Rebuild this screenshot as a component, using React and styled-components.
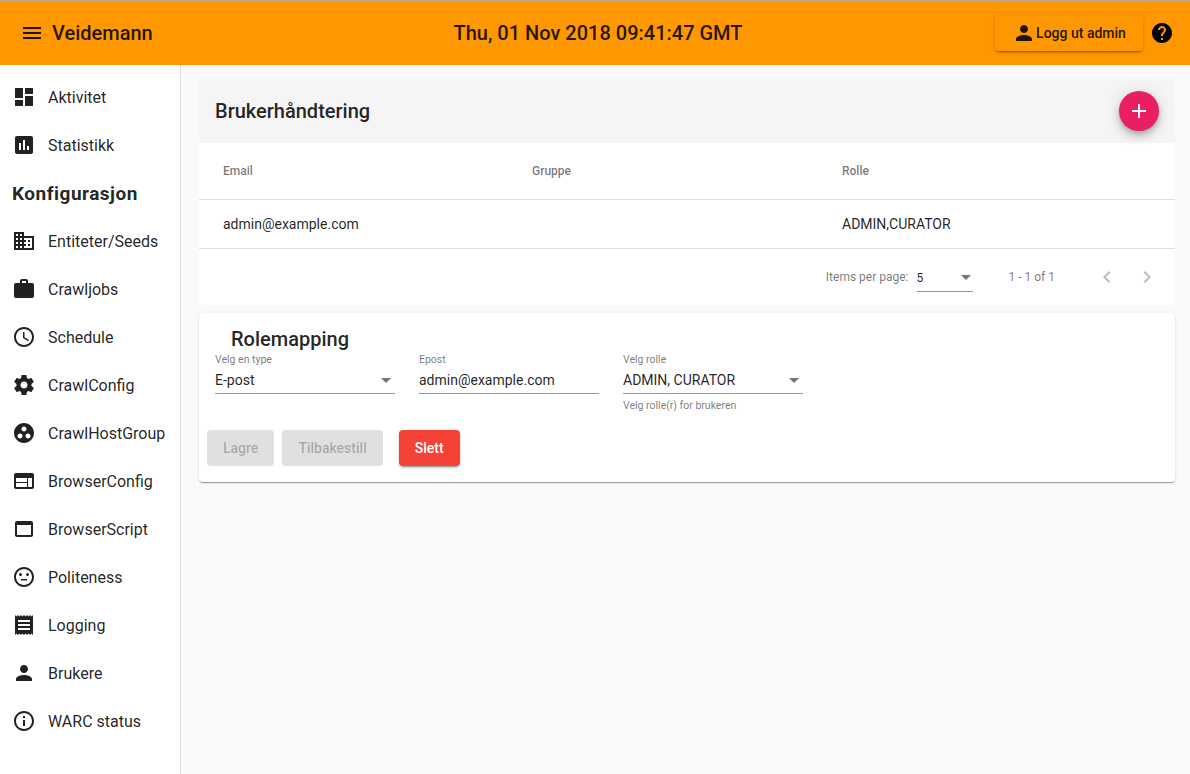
import React from "react";
import styled, { createGlobalStyle } from "styled-components";

const GlobalStyle = createGlobalStyle`
  html, body {
    margin: 0;
    height: 100%;
    overflow: hidden;
    font-family: Roboto, "Liberation Sans", sans-serif;
    color: rgba(0, 0, 0, 0.87);
    background: #fafafa;
  }
`;

// Material icon paths
const icons = {
  menu: "M3 18h18v-2H3v2zm0-5h18v-2H3v2zm0-7v2h18V6H3z",
  dashboard: "M3 13h8V3H3v10zm0 8h8v-6H3v6zm10 0h8V11h-8v10zm0-18v6h8V3h-8z",
  assessment: "M19 3H5c-1.1 0-2 .9-2 2v14c0 1.1.9 2 2 2h14c1.1 0 2-.9 2-2V5c0-1.1-.9-2-2-2zM9 17H7v-7h2v7zm4 0h-2V7h2v10zm4 0h-2v-4h2v4z",
  domain: "M12 7V3H2v18h20V7H12zM6 19H4v-2h2v2zm0-4H4v-2h2v2zm0-4H4V9h2v2zm0-4H4V5h2v2zm4 12H8v-2h2v2zm0-4H8v-2h2v2zm0-4H8V9h2v2zm0-4H8V5h2v2zm10 12h-8v-2h2v-2h-2v-2h2v-2h-2V9h8v10zm-2-8h-2v2h2v-2zm0 4h-2v2h2v-2z",
  work: "M20 6h-4V4c0-1.11-.89-2-2-2h-4c-1.11 0-2 .89-2 2v2H4c-1.11 0-1.99.89-1.99 2L2 19c0 1.11.89 2 2 2h16c1.11 0 2-.89 2-2V8c0-1.11-.89-2-2-2zm-6 0h-4V4h4v2z",
  schedule: "M11.99 2C6.47 2 2 6.48 2 12s4.47 10 9.99 10C17.52 22 22 17.52 22 12S17.52 2 11.99 2zM12 20c-4.42 0-8-3.58-8-8s3.58-8 8-8 8 3.58 8 8-3.58 8-8 8zm.5-13H11v6l5.25 3.15.75-1.23-4.5-2.67z",
  settings: "M19.43 12.98c.04-.32.07-.64.07-.98s-.03-.66-.07-.98l2.11-1.65c.19-.15.24-.42.12-.64l-2-3.46c-.12-.22-.39-.3-.61-.22l-2.49 1c-.52-.4-1.08-.73-1.69-.98l-.38-2.65C14.46 2.18 14.25 2 14 2h-4c-.25 0-.46.18-.49.42l-.38 2.65c-.61.25-1.17.59-1.69.98l-2.49-1c-.23-.09-.49 0-.61.22l-2 3.46c-.13.22-.07.49.12.64l2.11 1.65c-.04.32-.07.65-.07.98s.03.66.07.98l-2.11 1.65c-.19.15-.24.42-.12.64l2 3.46c.12.22.39.3.61.22l2.49-1c.52.4 1.08.73 1.69.98l.38 2.65c.03.24.24.42.49.42h4c.25 0 .46-.18.49-.42l.38-2.65c.61-.25 1.17-.59 1.69-.98l2.49 1c.23.09.49 0 .61-.22l2-3.46c.12-.22.07-.49-.12-.64l-2.11-1.65zM12 15.5c-1.93 0-3.5-1.57-3.5-3.5s1.57-3.5 3.5-3.5 3.5 1.57 3.5 3.5-1.57 3.5-3.5 3.5z",
  groupWork: "M12 2C6.48 2 2 6.48 2 12s4.48 10 10 10 10-4.48 10-10S17.52 2 12 2zM8 17.5c-1.38 0-2.5-1.12-2.5-2.5s1.12-2.5 2.5-2.5 2.5 1.12 2.5 2.5-1.12 2.5-2.5 2.5zM9.5 8c0-1.38 1.12-2.5 2.5-2.5s2.5 1.12 2.5 2.5-1.12 2.5-2.5 2.5S9.5 9.38 9.5 8zm6.5 9.5c-1.38 0-2.5-1.12-2.5-2.5s1.12-2.5 2.5-2.5 2.5 1.12 2.5 2.5-1.12 2.5-2.5 2.5z",
  web: "M20 4H4c-1.1 0-1.99.9-1.99 2L2 18c0 1.1.9 2 2 2h16c1.1 0 2-.9 2-2V6c0-1.1-.9-2-2-2zm-5 14H4v-4h11v4zm0-5H4V9h11v4zm5 5h-4V9h4v9z",
  webAsset: "M19 4H5c-1.11 0-2 .9-2 2v12c0 1.1.89 2 2 2h14c1.1 0 2-.9 2-2V6c0-1.1-.89-2-2-2zm0 14H5V8h14v10z",
  neutral: "M9 14h6v1.5H9zM15.5 8a1.5 1.5 0 1 0 0 3 1.5 1.5 0 0 0 0-3zM8.5 8a1.5 1.5 0 1 0 0 3 1.5 1.5 0 0 0 0-3zM11.99 2C6.47 2 2 6.48 2 12s4.47 10 9.99 10C17.52 22 22 17.52 22 12S17.52 2 11.99 2zM12 20c-4.42 0-8-3.58-8-8s3.58-8 8-8 8 3.58 8 8-3.58 8-8 8z",
  receipt: "M18 17H6v-2h12v2zm0-4H6v-2h12v2zm0-4H6V7h12v2zM3 22l1.5-1.5L6 22l1.5-1.5L9 22l1.5-1.5L12 22l1.5-1.5L15 22l1.5-1.5L18 22l1.5-1.5L21 22V2l-1.5 1.5L18 2l-1.5 1.5L15 2l-1.5 1.5L12 2l-1.5 1.5L9 2 7.5 3.5 6 2 4.5 3.5 3 2v20z",
  person: "M12 12c2.21 0 4-1.79 4-4s-1.79-4-4-4-4 1.79-4 4 1.79 4 4 4zm0 2c-2.67 0-8 1.34-8 4v2h16v-2c0-2.66-5.33-4-8-4z",
  info: "M11 7h2v2h-2zm0 4h2v6h-2zm1-9C6.48 2 2 6.48 2 12s4.48 10 10 10 10-4.48 10-10S17.52 2 12 2zm0 18c-4.41 0-8-3.59-8-8s3.59-8 8-8 8 3.59 8 8-3.59 8-8 8z",
  help: "M12 2C6.48 2 2 6.48 2 12s4.48 10 10 10 10-4.48 10-10S17.52 2 12 2zm1 17h-2v-2h2v2zm2.07-7.75l-.9.92C13.45 12.9 13 13.5 13 15h-2v-.5c0-1.1.45-2.1 1.17-2.83l1.24-1.26c.37-.36.59-.86.59-1.41 0-1.1-.9-2-2-2s-2 .9-2 2H8c0-2.21 1.79-4 4-4s4 1.79 4 4c0 .88-.36 1.68-.93 2.25z",
  add: "M19 13h-6v6h-2v-6H5v-2h6V5h2v6h6v2z",
  left: "M15.41 7.41L14 6l-6 6 6 6 1.41-1.41L10.83 12z",
  right: "M10 6L8.59 7.41 13.17 12l-4.58 4.59L10 18l6-6z",
};

const Svg = styled.svg`
  display: block;
  flex: none;
  width: ${(p) => p.$size || 24}px;
  height: ${(p) => p.$size || 24}px;
  fill: ${(p) => p.$color || "currentColor"};
`;

const Icon = ({ name, size, color }) => (
  <Svg viewBox="0 0 24 24" $size={size} $color={color}>
    <path d={icons[name]} />
  </Svg>
);

const Page = styled.div`
  height: 774px;
  display: flex;
  flex-direction: column;
  box-sizing: border-box;
  border-top: 1px solid #b5aa98;
`;

const Toolbar = styled.header`
  flex: none;
  height: 64px;
  box-sizing: border-box;
  background: #ff9800;
  display: grid;
  grid-template-columns: 1fr auto 1fr;
  align-items: center;
  padding: 0 16px 0 20px;
`;

const Brand = styled.div`
  display: flex;
  align-items: center;
  gap: 8px;
  font-size: 20px;
  font-weight: 500;
`;

const Clock = styled.div`
  font-size: 20px;
  font-weight: 500;
  margin-left: 2px;
`;

const ToolbarActions = styled.div`
  display: flex;
  align-items: center;
  justify-content: flex-end;
  gap: 7px;
`;

const LogoutButton = styled.button`
  height: 36px;
  width: 148px;
  padding: 0;
  border: none;
  border-radius: 4px;
  background: #ff9800;
  color: rgba(0, 0, 0, 0.87);
  font: 500 14px Roboto, sans-serif;
  display: flex;
  align-items: center;
  justify-content: center;
  box-shadow: 0 3px 1px -2px rgba(0, 0, 0, 0.2), 0 2px 2px 0 rgba(0, 0, 0, 0.14), 0 1px 5px 0 rgba(0, 0, 0, 0.12);
`;

const Body = styled.div`
  flex: 1;
  min-height: 0;
  display: flex;
`;

const SideNav = styled.nav`
  flex: none;
  width: 181px;
  box-sizing: border-box;
  background: #fff;
  border-right: 1px solid rgba(0, 0, 0, 0.12);
  padding-top: 8px;
`;

const NavItem = styled.a`
  height: 48px;
  display: flex;
  align-items: center;
  gap: 12px;
  padding-left: 12px;
  font-size: 16px;
  color: rgba(0, 0, 0, 0.87);
`;

const NavHeading = styled.div`
  height: 48px;
  display: flex;
  align-items: center;
  padding-left: 12px;
  font-size: 19px;
  font-weight: 700;
  letter-spacing: 0.5px;
`;

const Content = styled.main`
  flex: 1;
  padding: 14px 15px 0 18px;
  display: flex;
  flex-direction: column;
  gap: 8px;
`;

const TablePanel = styled.section`
  background: #fff;
`;

const TableHeader = styled.div`
  height: 64px;
  background: #f5f5f5;
  display: flex;
  align-items: center;
  justify-content: space-between;
  padding: 0 16px;
  font-size: 20px;
  font-weight: 500;
`;

const Fab = styled.button`
  width: 40px;
  height: 40px;
  padding: 0;
  border: none;
  border-radius: 50%;
  background: #e91e63;
  display: flex;
  align-items: center;
  justify-content: center;
  box-shadow: 0 3px 5px -1px rgba(0, 0, 0, 0.2), 0 6px 10px 0 rgba(0, 0, 0, 0.14), 0 1px 18px 0 rgba(0, 0, 0, 0.12);
`;

const Row = styled.div`
  display: grid;
  grid-template-columns: 309px 310px 1fr;
  align-items: center;
  padding-left: 24px;
  height: ${(p) => (p.$head ? 57 : 49)}px;
  box-sizing: border-box;
  border-bottom: 1px solid #e0e0e0;
  font-size: ${(p) => (p.$head ? 12 : 14)}px;
  font-weight: ${(p) => (p.$head ? 500 : 400)};
  color: ${(p) => (p.$head ? "rgba(0, 0, 0, 0.54)" : "rgba(0, 0, 0, 0.87)")};
`;

const Paginator = styled.div`
  height: 56px;
  display: flex;
  align-items: center;
  justify-content: flex-end;
  padding-right: 8px;
  font-size: 12px;
  color: rgba(0, 0, 0, 0.54);
`;

const PageSize = styled.div`
  width: 56px;
  height: 28px;
  box-sizing: border-box;
  margin: 2px 36px 0 8px;
  border-bottom: 1px solid rgba(0, 0, 0, 0.42);
  display: flex;
  align-items: center;
  justify-content: space-between;
  color: rgba(0, 0, 0, 0.87);
  padding-right: 2px;
`;

const Arrow = styled.span`
  width: 0;
  height: 0;
  border-left: 5px solid transparent;
  border-right: 5px solid transparent;
  border-top: 5px solid rgba(0, 0, 0, 0.54);
  flex: none;
`;

const Range = styled.span`
  margin-right: 32px;
`;

const PageButton = styled.span`
  width: 40px;
  height: 40px;
  display: flex;
  align-items: center;
  justify-content: center;
  color: rgba(0, 0, 0, 0.26);
`;

const FormCard = styled.section`
  background: #fff;
  border-radius: 4px;
  height: 169px;
  box-sizing: border-box;
  box-shadow: 0 2px 1px -1px rgba(0, 0, 0, 0.2), 0 1px 1px 0 rgba(0, 0, 0, 0.14), 0 1px 3px 0 rgba(0, 0, 0, 0.12);
  display: flex;
  flex-direction: column;
`;

const FormTitle = styled.h2`
  margin: 0;
  padding: 14px 0 0 32px;
  font-size: 20px;
  line-height: 24px;
  font-weight: 500;
`;

const Fields = styled.div`
  display: flex;
  gap: 24px;
  padding: 3px 0 0 16px;
  height: 64px;
`;

const Field = styled.div`
  width: 180px;
`;

const FieldLabel = styled.div`
  font-size: 10.5px;
  line-height: 12px;
  color: rgba(0, 0, 0, 0.54);
`;

const FieldValue = styled.div`
  height: 27px;
  box-sizing: border-box;
  margin-top: 1px;
  border-bottom: 1px solid rgba(0, 0, 0, 0.42);
  display: flex;
  align-items: center;
  justify-content: space-between;
  padding-right: 4px;
  font-size: 14px;
`;

const FieldHint = styled.div`
  margin-top: 6px;
  font-size: 10.5px;
  line-height: 12px;
  color: rgba(0, 0, 0, 0.54);
`;

const Actions = styled.div`
  display: flex;
  padding: 12px 0 0 8px;
`;

const ActionButton = styled.button`
  height: 36px;
  padding: 0 16px;
  margin-right: ${(p) => p.$gap || 8}px;
  border: none;
  border-radius: 4px;
  font: 500 14px Roboto, sans-serif;
  background: ${(p) => (p.$danger ? "#f44336" : "rgba(0, 0, 0, 0.12)")};
  color: ${(p) => (p.$danger ? "#fff" : "rgba(0, 0, 0, 0.26)")};
  box-shadow: ${(p) =>
    p.$danger
      ? "0 3px 1px -2px rgba(0, 0, 0, 0.2), 0 2px 2px 0 rgba(0, 0, 0, 0.14), 0 1px 5px 0 rgba(0, 0, 0, 0.12)"
      : "none"};
`;

const topLinks = [
  ["dashboard", "Aktivitet"],
  ["assessment", "Statistikk"],
];

const configLinks = [
  ["domain", "Entiteter/Seeds"],
  ["work", "Crawljobs"],
  ["schedule", "Schedule"],
  ["settings", "CrawlConfig"],
  ["groupWork", "CrawlHostGroup"],
  ["web", "BrowserConfig"],
  ["webAsset", "BrowserScript"],
  ["neutral", "Politeness"],
  ["receipt", "Logging"],
  ["person", "Brukere"],
  ["info", "WARC status"],
];

const Link = ({ icon, label }) => (
  <NavItem>
    <Icon name={icon} />
    {label}
  </NavItem>
);

const App = () => (
  <>
    <GlobalStyle />
    <Page>
      <Toolbar>
        <Brand>
          <Icon name="menu" />
          Veidemann
        </Brand>
        <Clock>Thu, 01 Nov 2018 09:41:47 GMT</Clock>
        <ToolbarActions>
          <LogoutButton>
            <Icon name="person" />
            Logg ut admin
          </LogoutButton>
          <Icon name="help" color="#000" />
        </ToolbarActions>
      </Toolbar>
      <Body>
        <SideNav>
          {topLinks.map(([icon, label]) => (
            <Link key={label} icon={icon} label={label} />
          ))}
          <NavHeading>Konfigurasjon</NavHeading>
          {configLinks.map(([icon, label]) => (
            <Link key={label} icon={icon} label={label} />
          ))}
        </SideNav>
        <Content>
          <TablePanel>
            <TableHeader>
              Brukerhåndtering
              <Fab>
                <Icon name="add" color="#fff" />
              </Fab>
            </TableHeader>
            <Row $head>
              <span>Email</span>
              <span>Gruppe</span>
              <span>Rolle</span>
            </Row>
            <Row>
              <span>admin@example.com</span>
              <span />
              <span>ADMIN,CURATOR</span>
            </Row>
            <Paginator>
              Items per page:
              <PageSize>
                5
                <Arrow />
              </PageSize>
              <Range>1 - 1 of 1</Range>
              <PageButton>
                <Icon name="left" />
              </PageButton>
              <PageButton>
                <Icon name="right" />
              </PageButton>
            </Paginator>
          </TablePanel>
          <FormCard>
            <FormTitle>Rolemapping</FormTitle>
            <Fields>
              <Field>
                <FieldLabel>Velg en type</FieldLabel>
                <FieldValue>
                  E-post
                  <Arrow />
                </FieldValue>
              </Field>
              <Field>
                <FieldLabel>Epost</FieldLabel>
                <FieldValue>admin@example.com</FieldValue>
              </Field>
              <Field>
                <FieldLabel>Velg rolle</FieldLabel>
                <FieldValue>
                  ADMIN, CURATOR
                  <Arrow />
                </FieldValue>
                <FieldHint>Velg rolle(r) for brukeren</FieldHint>
              </Field>
            </Fields>
            <Actions>
              <ActionButton>Lagre</ActionButton>
              <ActionButton $gap={16}>Tilbakestill</ActionButton>
              <ActionButton $danger>Slett</ActionButton>
            </Actions>
          </FormCard>
        </Content>
      </Body>
    </Page>
  </>
);

export default App;
